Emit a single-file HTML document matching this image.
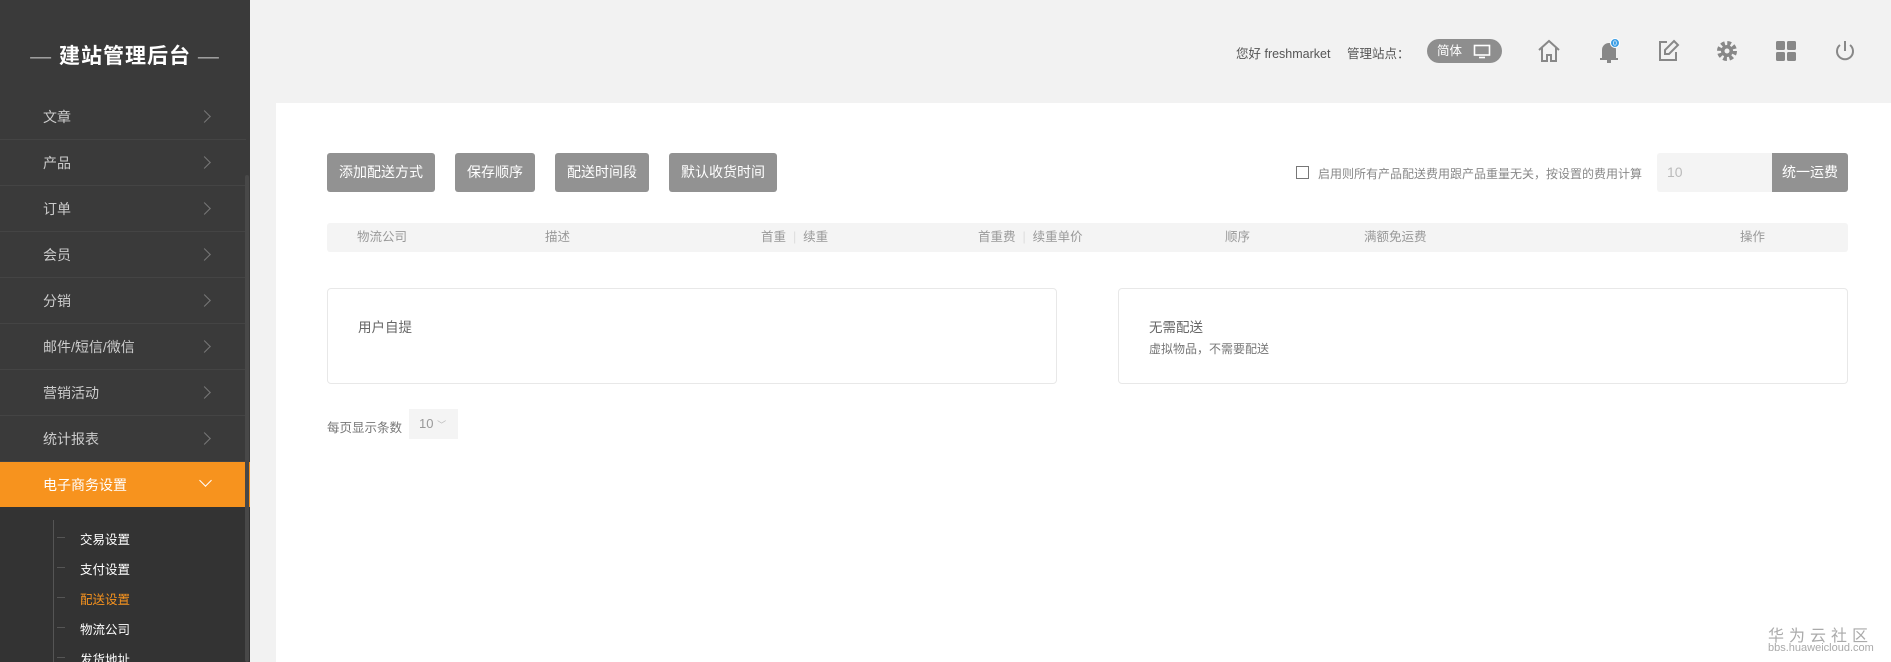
<!DOCTYPE html>
<html><head><meta charset="utf-8"><style>
*{margin:0;padding:0;box-sizing:border-box}
html,body{width:1891px;height:662px;overflow:hidden}
body{background:#f2f2f2;font-family:"Liberation Sans","Noto Sans CJK SC",sans-serif;position:relative}
.abs{position:absolute}
#side{left:0;top:0;width:250px;height:662px;background:#3a3a3a}
.title{left:0;width:250px;top:40px;text-align:center;color:#fff;font-size:21px;font-weight:bold;letter-spacing:1px}
.title span{color:#aaa;font-weight:normal}
.mi{left:0;width:246px;height:46px;border-bottom:1px solid #444;color:#ccc;font-size:14px;line-height:46px;padding-left:43px}
.mi i{position:absolute;left:200px;top:18px;width:9px;height:9px;border-top:1.5px solid #777;border-right:1.5px solid #777;transform:rotate(45deg)}
.act{background:#f7931e;color:#fff;border-bottom:none}
.act i{border-color:#fff;transform:rotate(135deg);top:14px;left:201px}
.sub{left:80px;color:#fff;font-size:12.5px}
.dash{left:57px;width:8px;height:1px;background:#555}
.btn{top:153px;height:39px;background:#929292;color:#fff;font-size:14px;line-height:39px;text-align:center;border-radius:3px}
.th{top:223px;line-height:29px;color:#999;font-size:12.5px}
.card{top:288px;height:96px;background:#fff;border:1px solid #e8e8e8;border-radius:4px}
.ic{top:38px;width:26px;height:26px}
</style></head><body>
<div class="abs" style="left:276px;top:103px;width:1615px;height:570px;background:#fff"></div>
<div id="side" class="abs">
<div class="abs title"><span>—</span> 建站管理后台 <span>—</span></div>
<div class="abs mi" style="top:94px">文章<i></i></div>
<div class="abs mi" style="top:140px">产品<i></i></div>
<div class="abs mi" style="top:186px">订单<i></i></div>
<div class="abs mi" style="top:232px">会员<i></i></div>
<div class="abs mi" style="top:278px">分销<i></i></div>
<div class="abs mi" style="top:324px">邮件/短信/微信<i></i></div>
<div class="abs mi" style="top:370px">营销活动<i></i></div>
<div class="abs mi" style="top:416px">统计报表<i></i></div>
<div class="abs mi act" style="top:462px;height:45px;width:250px">电子商务设置<i></i></div>
<div class="abs" style="left:0;top:507px;width:250px;height:155px;background:#333"></div>
<div class="abs" style="left:53px;top:520px;width:1px;height:142px;background:#555"></div>
<div class="abs dash" style="top:537px"></div>
<div class="abs dash" style="top:567px"></div>
<div class="abs dash" style="top:597px"></div>
<div class="abs dash" style="top:627px"></div>
<div class="abs dash" style="top:657px"></div>
<div class="abs sub" style="top:529px">交易设置</div>
<div class="abs sub" style="top:559px">支付设置</div>
<div class="abs sub" style="top:589px;color:#f7931e">配送设置</div>
<div class="abs sub" style="top:619px">物流公司</div>
<div class="abs sub" style="top:649px">发货地址</div>
<div class="abs" style="left:245px;top:175px;width:4px;height:487px;background:#484848;border-radius:2px"></div>
</div>
<div class="abs" style="left:1236px;top:43px;font-size:12.5px;color:#555">您好 freshmarket</div>
<div class="abs" style="left:1347px;top:43px;font-size:12.5px;color:#555">管理站点：</div>
<div class="abs" style="left:1427px;top:39px;width:75px;height:24px;border-radius:12px;background:#8e8e8e;color:#fff;font-size:12.5px;line-height:24px;padding-left:10px">简体
<svg class="abs" style="left:46px;top:5px" width="18" height="15" viewBox="0 0 18 15"><rect x="1.5" y="1.5" width="15" height="9.5" fill="none" stroke="#fff" stroke-width="1.6"/><path d="M6 13.5h6" stroke="#fff" stroke-width="1.6"/></svg></div>
<svg class="abs ic" style="left:1536px" viewBox="0 0 26 26"><path d="M3 12L13 3l10 9M6 10v13h5v-6h4v6h5V10" fill="none" stroke="#888" stroke-width="2"/></svg>
<svg class="abs ic" style="left:1596px" viewBox="0 0 26 26"><path d="M6 20V12a7 7 0 0 1 14 0v8h2v2H4v-2z" fill="#888"/><rect x="11" y="22" width="4" height="3" fill="#888"/><circle cx="19" cy="5" r="4.5" fill="#3c9ee5" stroke="#fff"/><text x="19" y="7.5" font-size="7" fill="#fff" text-anchor="middle" font-family="Liberation Sans">0</text></svg>
<svg class="abs ic" style="left:1655px" viewBox="0 0 26 26"><path d="M12 4H5v18h16v-8" fill="none" stroke="#888" stroke-width="2"/><path d="M19 3l4 4-9 9h-4v-4z" fill="none" stroke="#888" stroke-width="2"/></svg>
<svg class="abs ic" style="left:1714px" viewBox="0 0 26 26"><circle cx="13" cy="13" r="7.5" fill="none" stroke="#888" stroke-width="5" stroke-dasharray="3.5 2.4"/><circle cx="13" cy="13" r="6" fill="#888"/><circle cx="13" cy="13" r="2.5" fill="#f2f2f2"/></svg>
<svg class="abs ic" style="left:1773px" viewBox="0 0 26 26"><rect x="3" y="3" width="9" height="9" rx="1.5" fill="#888"/><rect x="14" y="3" width="9" height="9" rx="1.5" fill="#888"/><rect x="3" y="14" width="9" height="9" rx="1.5" fill="#888"/><rect x="14" y="14" width="9" height="9" rx="1.5" fill="#888"/></svg>
<svg class="abs ic" style="left:1832px" viewBox="0 0 26 26"><path d="M8 7a8 8 0 1 0 10 0" fill="none" stroke="#888" stroke-width="2"/><path d="M13 3v10" stroke="#888" stroke-width="2"/></svg>
<div class="abs btn" style="left:327px;width:108px">添加配送方式</div>
<div class="abs btn" style="left:455px;width:80px">保存顺序</div>
<div class="abs btn" style="left:555px;width:94px">配送时间段</div>
<div class="abs btn" style="left:669px;width:108px">默认收货时间</div>
<div class="abs" style="left:1296px;top:166px;width:13px;height:13px;border:1px solid #777"></div>
<div class="abs" style="left:1318px;top:165px;font-size:12px;color:#888;white-space:nowrap">启用则所有产品配送费用跟产品重量无关，按设置的费用计算</div>
<div class="abs" style="left:1657px;top:153px;width:115px;height:39px;background:#f4f4f4;color:#bbb;font-size:14px;line-height:39px;padding-left:10px;border-radius:3px 0 0 3px">10</div>
<div class="abs btn" style="left:1772px;width:76px;border-radius:0 3px 3px 0">统一运费</div>
<div class="abs" style="left:327px;top:223px;width:1521px;height:29px;background:#f4f4f4;border-radius:3px"></div>
<div class="abs th" style="left:357px">物流公司</div>
<div class="abs th" style="left:545px">描述</div>
<div class="abs th" style="left:761px">首重 <span style="color:#ddd">&nbsp;|&nbsp;</span> 续重</div>
<div class="abs th" style="left:978px">首重费 <span style="color:#ddd">&nbsp;|&nbsp;</span> 续重单价</div>
<div class="abs th" style="left:1225px">顺序</div>
<div class="abs th" style="left:1364px">满额免运费</div>
<div class="abs th" style="left:1740px">操作</div>
<div class="abs card" style="left:327px;width:730px"><div class="abs" style="left:30px;top:27px;font-size:13.5px;color:#666">用户自提</div></div>
<div class="abs card" style="left:1118px;width:730px"><div class="abs" style="left:30px;top:27px;font-size:13.5px;color:#666">无需配送</div><div class="abs" style="left:30px;top:51px;font-size:12px;color:#777">虚拟物品，不需要配送</div></div>
<div class="abs" style="left:327px;top:417px;font-size:12.5px;color:#777">每页显示条数</div>
<div class="abs" style="left:409px;top:409px;width:49px;height:30px;background:#f4f4f4;color:#999;font-size:13px;line-height:30px;padding-left:10px">10 <span style="font-size:9px;color:#bbb">﹀</span></div>
<div class="abs" style="left:1768px;top:622px;font-size:16px;color:#aaa;letter-spacing:5px">华为云社区</div>
<div class="abs" style="left:1768px;top:642px;font-size:11px;color:#aaa">bbs.huaweicloud.com</div>
</body></html>
